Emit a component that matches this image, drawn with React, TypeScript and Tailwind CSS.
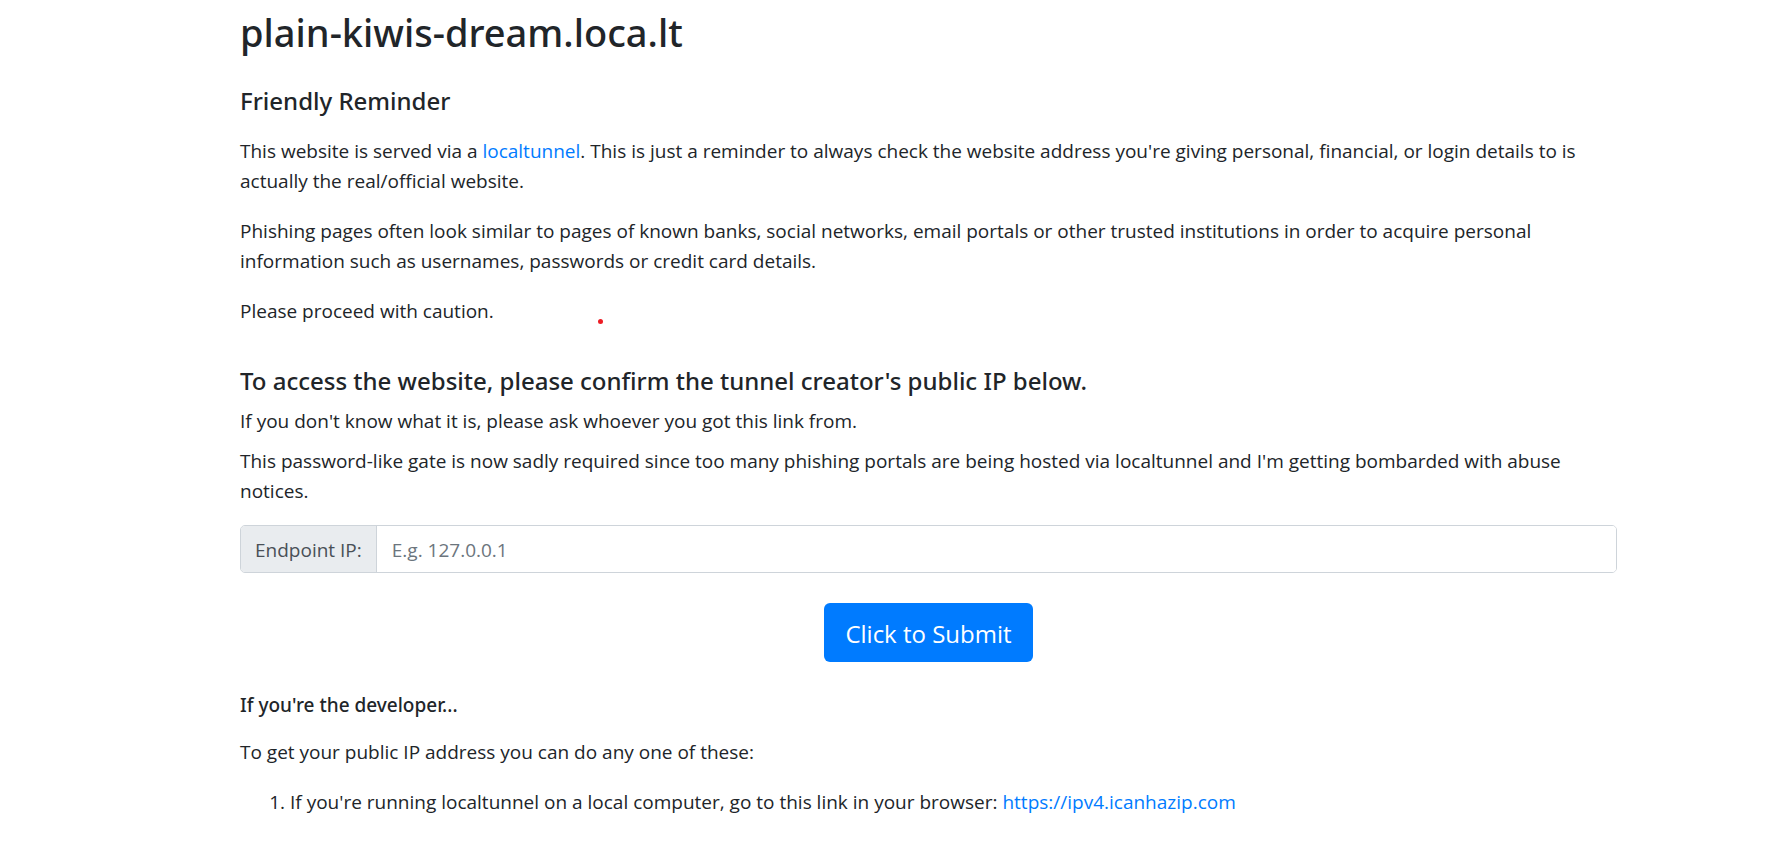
export default function App() {
  return (
    <div className="relative min-h-screen bg-white pt-2 pb-6 pl-60 pr-[151px] font-['Open_Sans',sans-serif] text-[19px] leading-[30px] text-[#212529]">
      <h1 className="mb-[30px] font-['Noto_Sans',sans-serif] text-[38px] leading-[48px] font-medium">plain-kiwis-dream.loca.lt</h1>
      <h4 className="mb-5 font-['Noto_Sans',sans-serif] text-[24px] leading-[30px] font-medium">Friendly Reminder</h4>
      <p className="mb-5">
        This website is served via a{' '}
        <a href="https://localtunnel.me" className="text-[#007bff]">localtunnel</a>. This is just a reminder to
        always check the website address you're giving personal, financial, or login details to is actually the
        real/official website.
      </p>
      <p className="mb-5">
        Phishing pages often look similar to pages of known banks, social networks, email portals or other trusted
        institutions in order to acquire personal information such as usernames, passwords or credit card details.
      </p>
      <p className="mb-10">Please proceed with caution.</p>
      <span aria-hidden="true" className="absolute top-[319px] left-[598px] size-[5px] rounded-full bg-[#ed1c24]" />

      <h4 className="mb-2.5 font-['Noto_Sans',sans-serif] text-[24px] leading-[30px] font-medium">
        To access the website, please confirm the tunnel creator's public IP below.
      </h4>
      <p className="mb-2.5">If you don't know what it is, please ask whoever you got this link from.</p>
      <p className="mb-[19px]">
        This password-like gate is now sadly required since too many phishing portals are being hosted via
        localtunnel and I'm getting bombarded with abuse notices.
      </p>

      <form onSubmit={(event) => event.preventDefault()}>
        <div className="mb-[30px] flex h-12 overflow-hidden rounded-[5px] border border-[#ced4da]">
          <label
            htmlFor="endpoint-ip"
            className="flex items-center border-r border-[#ced4da] bg-[#e9ecef] px-3.5 pt-0.5 whitespace-nowrap text-[#495057]"
          >
            Endpoint IP:
          </label>
          <input
            id="endpoint-ip"
            type="text"
            placeholder="E.g. 127.0.0.1"
            className="min-w-0 flex-1 bg-white px-[15px] pt-0.5 text-[#495057] outline-none placeholder:text-[#6c757d]"
          />
        </div>
        <div className="mb-[31px] flex justify-center">
          <button type="submit" className="h-[59px] rounded-md bg-[#007bff] px-[21px] pt-0.5 text-[24px] text-white">
            Click to Submit
          </button>
        </div>
      </form>

      <h6 className="mb-5 font-['Noto_Sans',sans-serif] leading-[24px] font-medium">If you're the developer...</h6>
      <p className="mb-5">To get your public IP address you can do any one of these:</p>
      <ol className="list-decimal pl-[50px]">
        <li>
          If you're running localtunnel on a local computer, go to this link in your browser:{' '}
          <a href="https://ipv4.icanhazip.com" className="text-[#007bff]">https://ipv4.icanhazip.com</a>
        </li>
      </ol>
    </div>
  )
}
